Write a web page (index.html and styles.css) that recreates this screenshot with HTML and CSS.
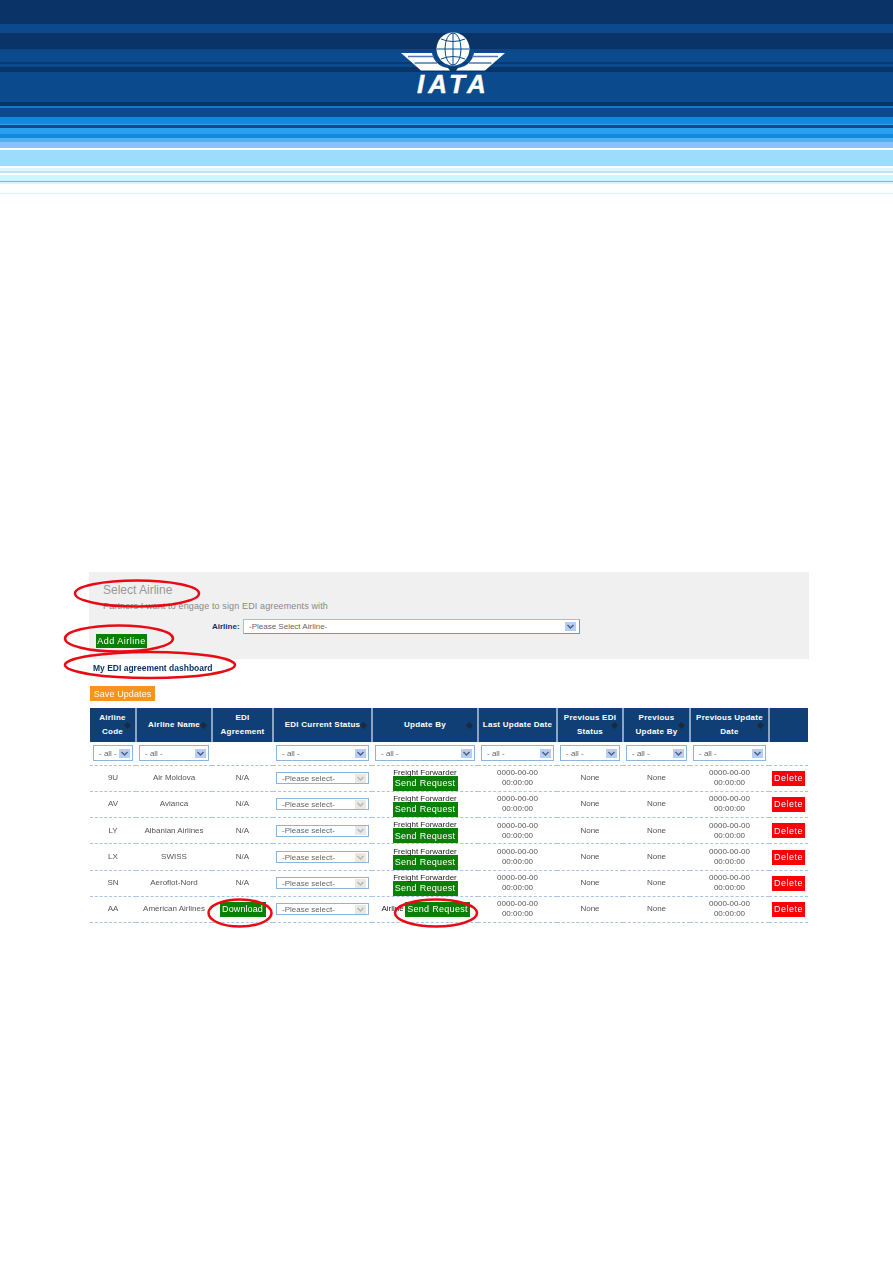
FILE: index.html
```html
<!DOCTYPE html>
<html lang="en">
<head>
    <meta charset="UTF-8">
    <meta name="viewport" content="width=device-width, initial-scale=1.0">
    <title>IATA - My EDI agreement dashboard</title>
    <link rel="stylesheet" href="styles.css">
</head>
<body>
    <header class="banner">
        <svg class="logo" viewBox="0 0 106 70" width="106" height="70" aria-label="IATA">
            <circle cx="53" cy="19" r="16.500" fill="#fff"/>
            <g fill="none" stroke="#0b4a8c" stroke-width="1">
                <ellipse cx="53" cy="19" rx="8" ry="16"/>
                <path d="M53 3V35M37 19H69M41 9Q53 14 65 9M41 29Q53 24 65 29"/>
            </g>
            <g id="wing">
                <path d="M1 23H32C33 30 39 37 48 38L50 40.500H21Z" fill="#fff"/>
                <path d="M8 26.500H34M14.500 33H37" fill="none" stroke="#4f78ac" stroke-width="1.300"/>
            </g>
            <use href="#wing" transform="matrix(-1 0 0 1 106 0)"/>
            <text class="logo-text" x="17" y="63">IATA</text>
        </svg>
    </header>

    <main class="content">
        <section class="panel">
            <h2>Select Airline</h2>
            <p>Partners I want to engage to sign EDI agreements with</p>
            <div class="airline-row">
                <label for="airline">Airline:</label>
                <select id="airline" class="field field-wide"><option>-Please Select Airline-</option></select>
            </div>
            <button class="btn btn-green btn-add">Add Airline</button>
        </section>

        <h3>My EDI agreement dashboard</h3>
        <button class="btn btn-orange btn-save">Save Updates</button>

        <table class="edi-table">
            <colgroup>
                <col class="c-code"><col class="c-name"><col class="c-agree"><col class="c-status"><col class="c-by">
                <col class="c-date"><col class="c-prev"><col class="c-prevby"><col class="c-prevdate"><col class="c-del">
            </colgroup>
            <thead>
                <tr>
                    <th class="sort">Airline<br>Code</th>
                    <th class="sort">Airline Name</th>
                    <th>EDI<br>Agreement</th>
                    <th class="sort">EDI Current Status</th>
                    <th class="sort">Update By</th>
                    <th>Last Update Date</th>
                    <th class="sort">Previous EDI<br>Status</th>
                    <th class="sort">Previous<br>Update By</th>
                    <th class="sort">Previous Update<br>Date</th>
                    <th></th>
                </tr>
                <tr class="filters">
                    <td><select class="field"><option>- all -</option></select></td>
                    <td><select class="field"><option>- all -</option></select></td>
                    <td></td>
                    <td><select class="field"><option>- all -</option></select></td>
                    <td><select class="field"><option>- all -</option></select></td>
                    <td><select class="field"><option>- all -</option></select></td>
                    <td><select class="field"><option>- all -</option></select></td>
                    <td><select class="field"><option>- all -</option></select></td>
                    <td><select class="field"><option>- all -</option></select></td>
                    <td></td>
                </tr>
            </thead>
            <tbody>
                <tr>
                    <td>9U</td><td>Air Moldova</td><td>N/A</td>
                    <td><select class="field field-row"><option>-Please select-</option></select></td>
                    <td class="by-cell"><span class="by">Freight Forwarder</span><button class="btn btn-green btn-send">Send Request</button></td>
                    <td>0000-00-00 00:00:00</td><td>None</td><td>None</td><td>0000-00-00 00:00:00</td>
                    <td><button class="btn btn-red">Delete</button></td>
                </tr>
                <tr>
                    <td>AV</td><td>Avianca</td><td>N/A</td>
                    <td><select class="field field-row"><option>-Please select-</option></select></td>
                    <td class="by-cell"><span class="by">Freight Forwarder</span><button class="btn btn-green btn-send">Send Request</button></td>
                    <td>0000-00-00 00:00:00</td><td>None</td><td>None</td><td>0000-00-00 00:00:00</td>
                    <td><button class="btn btn-red">Delete</button></td>
                </tr>
                <tr>
                    <td>LY</td><td>Albanian Airlines</td><td>N/A</td>
                    <td><select class="field field-row"><option>-Please select-</option></select></td>
                    <td class="by-cell"><span class="by">Freight Forwarder</span><button class="btn btn-green btn-send">Send Request</button></td>
                    <td>0000-00-00 00:00:00</td><td>None</td><td>None</td><td>0000-00-00 00:00:00</td>
                    <td><button class="btn btn-red">Delete</button></td>
                </tr>
                <tr>
                    <td>LX</td><td>SWISS</td><td>N/A</td>
                    <td><select class="field field-row"><option>-Please select-</option></select></td>
                    <td class="by-cell"><span class="by">Freight Forwarder</span><button class="btn btn-green btn-send">Send Request</button></td>
                    <td>0000-00-00 00:00:00</td><td>None</td><td>None</td><td>0000-00-00 00:00:00</td>
                    <td><button class="btn btn-red">Delete</button></td>
                </tr>
                <tr>
                    <td>SN</td><td>Aeroflot-Nord</td><td>N/A</td>
                    <td><select class="field field-row"><option>-Please select-</option></select></td>
                    <td class="by-cell"><span class="by">Freight Forwarder</span><button class="btn btn-green btn-send">Send Request</button></td>
                    <td>0000-00-00 00:00:00</td><td>None</td><td>None</td><td>0000-00-00 00:00:00</td>
                    <td><button class="btn btn-red">Delete</button></td>
                </tr>
                <tr class="row-active">
                    <td>AA</td><td>American Airlines</td><td><button class="btn btn-green btn-download">Download</button></td>
                    <td><select class="field field-row"><option>-Please select-</option></select></td>
                    <td><div class="by-inline"><span class="by-clip">Airline</span><button class="btn btn-green btn-send">Send Request</button></div></td>
                    <td>0000-00-00 00:00:00</td><td>None</td><td>None</td><td>0000-00-00 00:00:00</td>
                    <td><button class="btn btn-red">Delete</button></td>
                </tr>
            </tbody>
        </table>
    </main>

    <!-- red review marks drawn over the page -->
    <svg class="marks" width="893" height="1263">
        <ellipse cx="137" cy="593.500" rx="62" ry="13"/>
        <ellipse cx="119" cy="638.500" rx="54" ry="13"/>
        <ellipse cx="150" cy="665" rx="85" ry="13"/>
        <ellipse cx="240" cy="913" rx="31.500" ry="13.500"/>
        <ellipse cx="436" cy="913" rx="41" ry="13.500"/>
    </svg>
</body>
</html>
```

FILE: styles.css
```css
body {
    margin: 0;
    background: #fff;
    font-family: "Liberation Sans", Arial, sans-serif;
    font-size: 8px;
    color: #333;
}

/* banner stripes */
.banner {
    height: 194px;
    display: flex;
    justify-content: center;
    padding: 30px 0 0 13px;
    box-sizing: border-box;
    background: linear-gradient(to bottom,
        #0a3468 0 24px, #0b4a8c 24px 33px, #0a3468 33px 49px, #0b4686 49px 51px,
        #0b4a8c 51px 62px, #0a3a72 62px 64px, #0b4a8c 64px 67px, #0a3468 67px 72px,
        #0b4a8c 72px 102px, #0a3468 102px 106px, #1a78c8 106px 108px, #0b4a8c 108px 117px,
        #1488dc 117px 124px, #32a0ea 124px 125px, #0b4a8c 125px 128px, #2aa0f0 128px 134px,
        #1488dc 134px 138px, #55b0f0 138px 142px, #88c4fa 142px 148px, #fff 148px 150px,
        #9edcfe 150px 166px, #fff 166px 168px, #e0f4ff 168px 171px, #bfe4fa 171px 173px,
        #fff 173px 175px, #d4f4fc 175px 181px, #78bcc8 181px 182px, #d4f8f8 182px 184px,
        #fdfefe 184px 193px, #d8f4f8 193px 194px);
}
.logo-text {
    font-family: "Liberation Sans", Arial, sans-serif;
    font-weight: bold;
    font-style: italic;
    font-size: 26px;
    letter-spacing: 4px;
    fill: #fff;
    stroke: #fff;
    stroke-width: 0.4;
}

.content {
    margin: 378px 0 0 89px;
    width: 720px;
    filter: blur(0.3px);
}

.panel {
    height: 87px;
    box-sizing: border-box;
    padding: 12px 0 0 7px;
    background: #f0f0f0;
}
.panel h2 {
    margin: 0 0 0 7px;
    font-size: 12px;
    line-height: 13px;
    font-weight: normal;
    color: #999;
}
.panel p {
    margin: 4px 0 0 7px;
    font-size: 9px;
    line-height: 11px;
    color: #888;
    letter-spacing: 0.13px;
}
.airline-row {
    display: flex;
    align-items: center;
    margin: 7px 0 0 116px;
}
.airline-row label {
    width: 31px;
    font-weight: bold;
    color: #0a3468;
}

.btn {
    display: inline-block;
    border: 0;
    padding: 0;
    font-family: inherit;
    font-size: 9px;
    letter-spacing: 0.5px;
    color: #fff;
    text-align: center;
    cursor: pointer;
}
.btn-green { background: #0a8006; }
.btn-orange { background: #f7941d; }
.btn-red { background: #fb0006; width: 33px; height: 15px; }
.btn-add { display: block; width: 51px; height: 14px; }
.btn-save { display: block; width: 65px; height: 15px; margin: 13px 0 0 1px; letter-spacing: 0.1px; }
.btn-send { display: block; width: 65px; height: 15px; margin: -1px auto 0; letter-spacing: 0.3px; }
.btn-download { width: 46px; height: 15px; letter-spacing: 0.1px; }

h3 {
    margin: 4px 0 0 4px;
    font-size: 8.5px;
    line-height: 10px;
    color: #0a3468;
}

.field {
    -webkit-appearance: none;
    appearance: none;
    display: block;
    width: 100%;
    height: 16px;
    box-sizing: border-box;
    padding: 0 12px 0 5px;
    border: 1px solid #8fb4dc;
    border-radius: 0;
    font-family: inherit;
    font-size: 8px;
    color: #666;
    background: #fff url("data:image/svg+xml,%3Csvg xmlns='http://www.w3.org/2000/svg' width='11' height='9'%3E%3Crect width='11' height='9' fill='%23b8cdf4'/%3E%3Cpath d='M2.500 3L5.500 6L8.500 3' fill='none' stroke='%234d6185' stroke-width='1.500'/%3E%3C/svg%3E") no-repeat right 2px center;
}
.field-wide {
    width: 337px;
    height: 15px;
    border-color: #9cc3e6 #5b9bd5 #5b9bd5 #9cc3e6;
    background-position: right 3px center;
}
.field-row {
    height: 12px;
    background-image: url("data:image/svg+xml,%3Csvg xmlns='http://www.w3.org/2000/svg' width='11' height='9'%3E%3Crect width='11' height='9' fill='%23e8e8e4'/%3E%3Cpath d='M2.500 3L5.500 6L8.500 3' fill='none' stroke='%23b8b8b0' stroke-width='1.500'/%3E%3C/svg%3E");
}

.edi-table {
    margin: 7px 0 0 1px;
    width: 718px;
    table-layout: fixed;
    border-collapse: collapse;
}
.c-code { width: 46px; }
.c-name { width: 76px; }
.c-agree { width: 61px; }
.c-status { width: 99px; }
.c-by { width: 106px; }
.c-date { width: 79px; }
.c-prev { width: 66px; }
.c-prevby { width: 67px; }
.c-prevdate { width: 79px; }
.c-del { width: 39px; }

.edi-table th {
    position: relative;
    height: 34px;
    padding: 0;
    box-sizing: border-box;
    border-right: 2px solid #8aa6c4;
    background: #0f3f75;
    color: #fff;
    font-size: 8px;
    line-height: 14px;
    letter-spacing: 0.25px;
    text-align: center;
}
.edi-table th:last-child { border-right: 0; }
/* sort arrows */
.edi-table th.sort::after {
    content: "";
    position: absolute;
    right: 5px;
    top: 15px;
    width: 5px;
    height: 5px;
    background: #1d2a3a;
    transform: rotate(45deg);
}

.edi-table td {
    height: 26.300px;
    padding: 0 3px;
    box-sizing: border-box;
    border-bottom: 1px dashed #a9c4e0;
    text-align: center;
    color: #555;
    line-height: 10px;
}
.edi-table .by-cell { padding-top: 3px; }
.filters td { height: 23px; }

.by {
    display: block;
    line-height: 8px;
    color: #222;
}
.by-inline {
    display: flex;
    align-items: center;
    padding-left: 5px;
}
.by-clip {
    width: 25px;
    overflow: hidden;
    color: #222;
}
.by-inline .btn-send { margin: 0; }
.row-active td { height: 26px; }

/* review marks */
.marks {
    position: absolute;
    left: 0;
    top: 0;
    pointer-events: none;
}
.marks ellipse {
    fill: none;
    stroke: #ea0a14;
    stroke-width: 2.500;
}
```
